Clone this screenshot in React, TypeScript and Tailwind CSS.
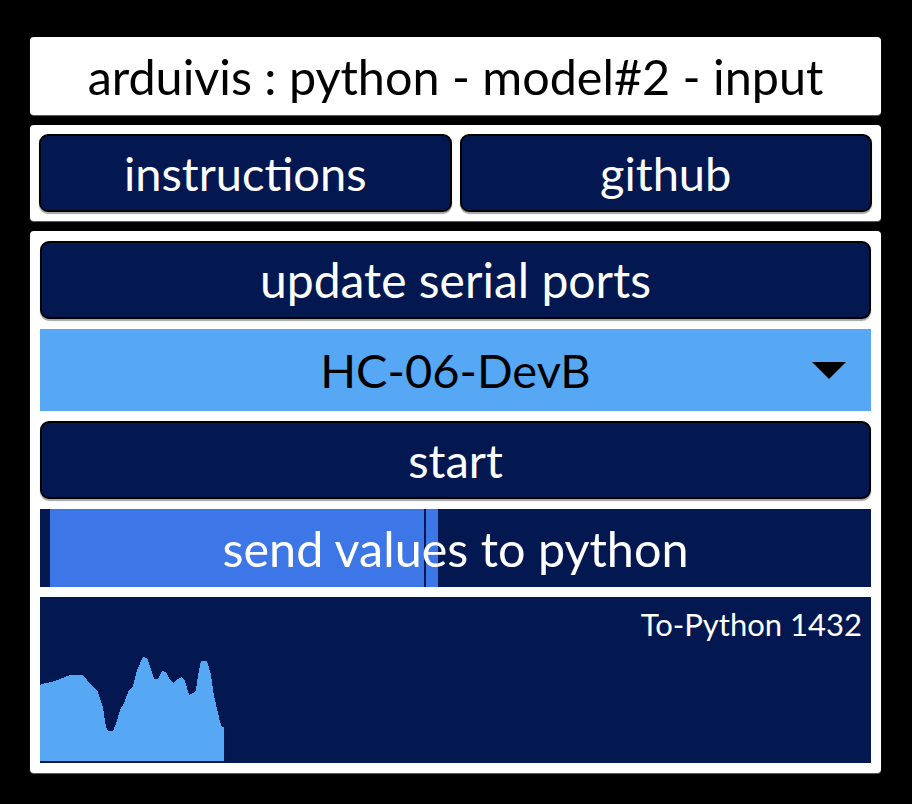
const wave: [number, number][] = [
  [0, 88], [5, 86], [12, 85], [20, 82], [30, 78], [42, 78], [47, 83], [53, 90],
  [57, 93], [60, 101], [63, 111], [66, 130], [68, 134], [73, 134], [77, 124],
  [80, 113], [84, 106], [89, 93], [93, 89], [97, 73], [103, 60], [107, 61],
  [110, 69], [114, 82], [118, 82], [122, 74], [126, 75], [130, 83], [133, 86],
  [138, 82], [142, 80], [145, 84], [149, 98], [153, 96], [156, 93], [158, 79],
  [161, 64], [167, 64], [171, 78], [173, 93], [175, 103], [178, 116], [180, 125],
  [182, 130], [184, 130], [184, 164], [0, 164],
];

function NavButton({ label, className = "" }: { label: string; className?: string }) {
  return (
    <button
      className={`h-[78px] rounded-[9px] border-2 border-black bg-[#031850] text-white leading-none shadow-[0_2px_1px_rgba(0,0,0,0.35)] ${className}`}
    >
      {label}
    </button>
  );
}

export default function App() {
  const points = wave.map(([x, y]) => `${x},${y}`).join(" ");
  return (
    <div className="w-[912px] h-[804px] bg-black pt-[37px] px-[30px] font-['Lato',sans-serif]">
      <div className="w-[851px] flex flex-col gap-[10px]">
        <div className="h-[78px] rounded-[4px] bg-white flex items-center justify-center text-black text-[48.5px] leading-none shadow-[0_1px_1px_rgba(120,120,120,0.8)]">
          arduivis : python - model#2 - input
        </div>

        <div className="rounded-[4px] bg-white p-[9px] flex gap-2 shadow-[0_1px_1px_rgba(120,120,120,0.8)]">
          <NavButton label="instructions" className="flex-1 text-[47px]" />
          <NavButton label="github" className="flex-1 text-[47px]" />
        </div>

        <div className="rounded-[4px] bg-white p-[10px] flex flex-col gap-[10px] shadow-[0_1px_1px_rgba(120,120,120,0.8)]">
          <NavButton label="update serial ports" className="w-full text-[48px]" />

          <div className="relative h-[82px] bg-[#56a8f5] flex items-center justify-center text-black text-[47px] leading-none">
            HC-06-DevB
            <svg
              className="absolute right-[25px] top-[33px]"
              width="34"
              height="17"
              viewBox="0 0 34 17"
            >
              <polygon points="0,0 34,0 17,17" fill="#000" />
            </svg>
          </div>

          <NavButton label="start" className="w-full text-[47px]" />

          <div className="relative h-[78px] bg-[#031850] flex items-center justify-center text-white text-[48.5px] leading-none">
            <div className="absolute left-[10px] top-0 bottom-0 w-[388px] bg-[#3d76e6]" />
            <div className="absolute left-[384px] top-0 bottom-0 w-[2px] bg-[#031850]" />
            <span className="relative">send values to python</span>
          </div>

          <div className="relative h-[166px] bg-[#031850]">
            <svg className="absolute left-0 top-0" width="832" height="166" viewBox="0 0 832 166" shapeRendering="crispEdges">
              <polygon points={points} fill="#56a8f5" />
            </svg>
            <span className="absolute right-[9px] top-[12px] text-white text-[31px] leading-none">
              To-Python 1432
            </span>
          </div>
        </div>
      </div>
    </div>
  );
}
